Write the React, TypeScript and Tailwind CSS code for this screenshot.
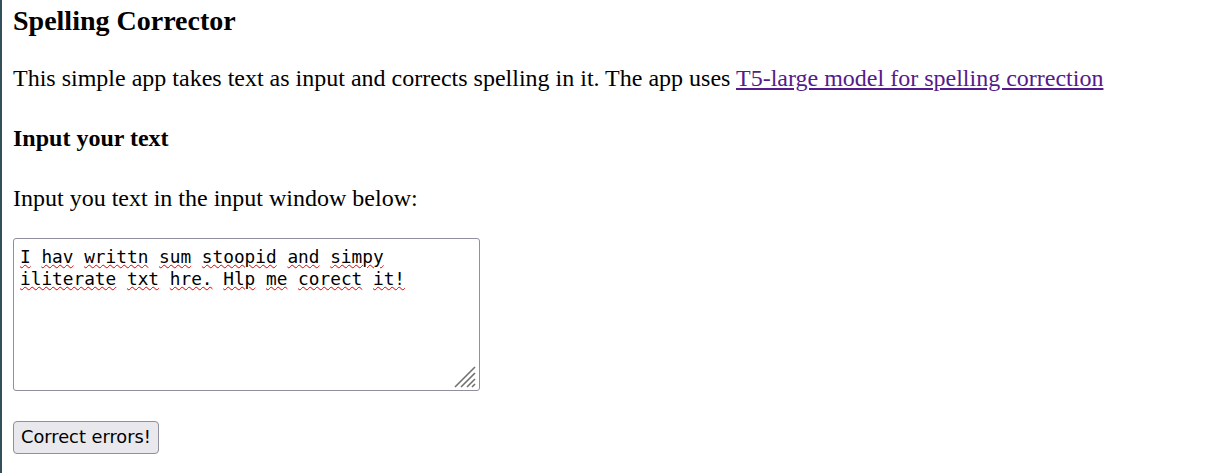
import React from 'react';

const lines: string[][] = [
  ['I', 'hav', 'writtn', 'sum', 'stoopid', 'and', 'simpy'],
  ['iliterate', 'txt', 'hre.', 'Hlp', 'me', 'corect', 'it!'],
];

// resize grip drawn in the textarea's corner
const Grip = () => (
  <svg width="24" height="22" viewBox="0 0 24 22" className="absolute right-[2px] bottom-[2px]">
    <path d="M22 1 L2 21 M22 7 L8 21 M22 13 L14 21 M22 18 L19 21" stroke="#707070" strokeWidth="1.6" />
  </svg>
);

export default function App() {
  return (
    <div className="min-h-[473px] bg-white border-l-2 border-[#33505a] px-[11px] pt-[5px] font-['Liberation_Serif',serif] text-black">
      <h3 className="text-[28px] font-bold leading-[32px]">Spelling Corrector</h3>
      <p className="mt-[28px] text-[24px] leading-[27px]">
        This simple app takes text as input and corrects spelling in it. The app uses{' '}
        <a href="#" className="text-[#551a8b] underline">
          T5-large model for spelling correction
        </a>
      </p>
      <h4 className="mt-[33px] text-[24px] font-bold leading-[27px]">Input your text</h4>
      <p className="mt-[33px] text-[24px] leading-[27px]">Input you text in the input window below:</p>
      <div className="relative mt-[26px] w-[467px] h-[153px] border border-[#8f8f9d] rounded-[3px] px-[6px] py-[7px] font-['DejaVu_Sans_Mono',monospace] text-[17.77px] leading-[22px]">
        {lines.map((line, i) => (
          <div key={i} className="flex gap-[10.7px]">
            {line.map((w, j) => (
              <span key={j} className="underline decoration-wavy decoration-[#e00000] decoration-1 underline-offset-[1px]">
                {w}
              </span>
            ))}
          </div>
        ))}
        <Grip />
      </div>
      <button className="mt-[30px] h-[33px] px-[7px] border border-[#8f8f9d] rounded-[4px] bg-[#e9e9ed] font-['DejaVu_Sans',sans-serif] text-[17.77px] leading-none">
        Correct errors!
      </button>
    </div>
  );
}
